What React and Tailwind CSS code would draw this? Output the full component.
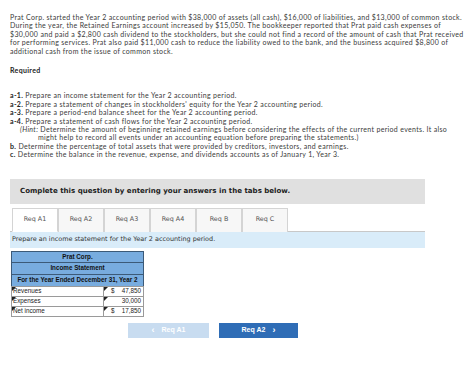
import React from "react";

const para = [
  "Prat Corp. started the Year 2 accounting period with $38,000 of assets (all cash), $16,000 of liabilities, and $13,000 of common stock.",
  "During the year, the Retained Earnings account increased by $15,050. The bookkeeper reported that Prat paid cash expenses of",
  "$30,000 and paid a $2,800 cash dividend to the stockholders, but she could not find a record of the amount of cash that Prat received",
  "for performing services. Prat also paid $11,000 cash to reduce the liability owed to the bank, and the business acquired $8,800 of",
  "additional cash from the issue of common stock.",
];

function Mark() {
  return (
    <span className="absolute left-0 top-0 w-0 h-0 border-t-[4px] border-t-[#222] border-r-[4px] border-r-transparent" />
  );
}

export default function App() {
  const tabs = ["Req A1", "Req A2", "Req A3", "Req A4", "Req B", "Req C"];
  return (
    <div className="w-[474px] h-[365px] bg-white overflow-hidden text-[#3a3a3a]">
      <div className="pl-[10px] pt-[13px] font-['Lato',sans-serif] text-[7px] leading-[8.4px] tracking-[0.33px]">
        {para.map((l, i) => (
          <div key={i} className="whitespace-nowrap">{l}</div>
        ))}
        <div className="mt-[11px] font-bold text-[#222]">Required</div>
        <div className="mt-[17px]">
          <div className="whitespace-nowrap"><b className="text-[#222]">a-1.</b> Prepare an income statement for the Year 2 accounting period.</div>
          <div className="whitespace-nowrap"><b className="text-[#222]">a-2.</b> Prepare a statement of changes in stockholders' equity for the Year 2 accounting period.</div>
          <div className="whitespace-nowrap"><b className="text-[#222]">a-3.</b> Prepare a period-end balance sheet for the Year 2 accounting period.</div>
          <div className="whitespace-nowrap"><b className="text-[#222]">a-4.</b> Prepare a statement of cash flows for the Year 2 accounting period.</div>
          <div className="whitespace-nowrap pl-[10px]"><i>(Hint:</i> Determine the amount of beginning retained earnings before considering the effects of the current period events. It also</div>
          <div className="whitespace-nowrap pl-[28px]">might help to record all events under an accounting equation before preparing the statements.)</div>
          <div className="whitespace-nowrap"><b className="text-[#222]">b.</b> Determine the percentage of total assets that were provided by creditors, investors, and earnings.</div>
          <div className="whitespace-nowrap"><b className="text-[#222]">c.</b> Determine the balance in the revenue, expense, and dividends accounts as of January 1, Year 3.</div>
        </div>
      </div>

      <div className="ml-[10px] mt-[20px] w-[415px] font-['DejaVu_Sans',sans-serif]">
        <div className="h-[25px] bg-[#e0e0e0] flex items-center pl-[10px] text-[7.05px] font-bold text-[#222]">
          Complete this question by entering your answers in the tabs below.
        </div>
        <div className="mt-[4px] flex pl-[2px] border-b border-[#c8c8c8]">
          {tabs.map((t, i) => (
            <div
              key={t}
              className={
                "w-[46px] h-[24px] flex items-center justify-center text-[6.4px] text-[#555] border-t border-l border-r border-[#d4d4d4] -mb-px " +
                (i === 0 ? "bg-white border-b border-b-white" : "bg-[#f7f7f7]")
              }
            >
              {t}
            </div>
          ))}
        </div>
        <div className="h-[16px] bg-[#d9ecf9] flex items-center pl-[2px] text-[6.45px] text-[#333]">
          Prepare an income statement for the Year 2 accounting period.
        </div>
      </div>

      <div className="ml-[11px] mt-[3px] w-[133px] font-['Liberation_Sans',sans-serif] text-[6.3px] text-[#111]">
        <div className="border border-[#3c5a78]">
          <div className="h-[11px] bg-[#78acdf] flex items-center justify-center font-bold border-b border-[#3c5a78]">Prat Corp.</div>
          <div className="h-[12px] bg-[#78acdf] flex items-center justify-center font-bold border-b border-[#3c5a78]">Income Statement</div>
          <div className="h-[11px] bg-[#78acdf] flex items-center justify-center font-bold">For the Year Ended December 31, Year 2</div>
        </div>
        {[
          ["Revenues", "$", "47,850"],
          ["Expenses", "", "30,000"],
          ["Net income", "$", "17,850"],
        ].map(([l, s, v]) => (
          <div key={l} className="flex h-[11px] -mt-px">
            <div className="relative w-[93px] border border-[#9a9a9a] flex items-center pl-[1px] text-[#222]">
              <Mark />
              {l}
            </div>
            <div className="relative flex-1 -ml-px border border-[#9a9a9a] flex items-center justify-between pl-[7px] pr-[2px] text-[#222]">
              <Mark />
              <span>{s}</span>
              <span>{v}</span>
            </div>
          </div>
        ))}
      </div>

      <div className="mt-[6px] ml-[128px] flex gap-[10px] font-['Liberation_Sans',sans-serif] text-[7px] font-bold">
        <div className="w-[81px] h-[15px] bg-[#c8dcf0] text-white flex items-center justify-center gap-[7px]">
          <span className="text-[9px] leading-none">&lsaquo;</span>
          <span>Req A1</span>
        </div>
        <div className="w-[79px] h-[15px] bg-[#2f6db6] text-white flex items-center justify-center gap-[7px]">
          <span>Req A2</span>
          <span className="text-[9px] leading-none">&rsaquo;</span>
        </div>
      </div>
    </div>
  );
}
